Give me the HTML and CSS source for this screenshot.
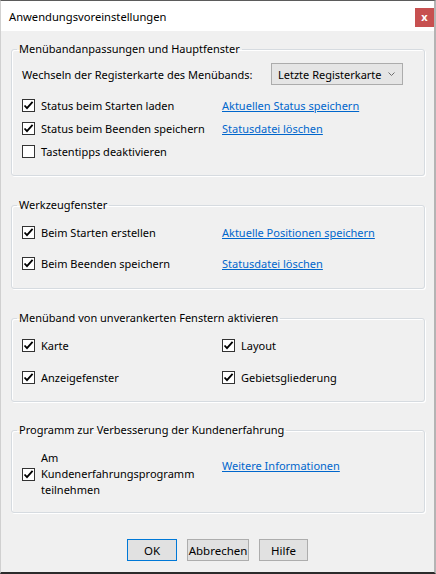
FILE: index.html
```html
<!DOCTYPE html>
<html lang="de">
<head>
<meta charset="utf-8">
<title>Anwendungsvoreinstellungen</title>
<link rel="stylesheet" href="styles.css">
</head>
<body>
<div class="window">
  <div class="titlebar">
    <span class="title">Anwendungsvoreinstellungen</span>
    <span class="close">x</span>
  </div>
  <div class="content">
    <fieldset class="group g1">
      <legend>Menübandanpassungen und Hauptfenster</legend>
      <div class="tabrow">
        <span class="lbl">Wechseln der Registerkarte des Menübands:</span>
        <div class="select">
          <span>Letzte Registerkarte</span>
          <svg class="chev" width="7" height="4" viewBox="0 0 7 4"><path d="M0.5 0.5 L3.5 3.5 L6.5 0.5" fill="none" stroke="#6d6d6d" stroke-width="1"/></svg>
        </div>
      </div>
      <div class="grid rows23">
        <label class="check"><span class="box"><svg width="11" height="11" viewBox="0 0 11 11"><path d="M1.5 5.5 L4 8.2 L9.6 1.8" fill="none" stroke="#000" stroke-width="1.8"/></svg></span>Status beim Starten laden</label>
        <a class="link" href="#">Aktuellen Status speichern</a>
        <label class="check"><span class="box"><svg width="11" height="11" viewBox="0 0 11 11"><path d="M1.5 5.5 L4 8.2 L9.6 1.8" fill="none" stroke="#000" stroke-width="1.8"/></svg></span>Status beim Beenden speichern</label>
        <a class="link" href="#">Statusdatei löschen</a>
        <label class="check"><span class="box"></span>Tastentipps deaktivieren</label>
        <span></span>
      </div>
    </fieldset>

    <fieldset class="group g2">
      <legend>Werkzeugfenster</legend>
      <div class="grid rows24">
        <label class="check"><span class="box"><svg width="11" height="11" viewBox="0 0 11 11"><path d="M1.5 5.5 L4 8.2 L9.6 1.8" fill="none" stroke="#000" stroke-width="1.8"/></svg></span>Beim Starten erstellen</label>
        <a class="link" href="#">Aktuelle Positionen speichern</a>
        <label class="check"><span class="box"><svg width="11" height="11" viewBox="0 0 11 11"><path d="M1.5 5.5 L4 8.2 L9.6 1.8" fill="none" stroke="#000" stroke-width="1.8"/></svg></span>Beim Beenden speichern</label>
        <a class="link" href="#">Statusdatei löschen</a>
      </div>
    </fieldset>

    <fieldset class="group g3">
      <legend>Menüband von unverankerten Fenstern aktivieren</legend>
      <div class="grid rows24 gap8">
        <label class="check"><span class="box"><svg width="11" height="11" viewBox="0 0 11 11"><path d="M1.5 5.5 L4 8.2 L9.6 1.8" fill="none" stroke="#000" stroke-width="1.8"/></svg></span>Karte</label>
        <label class="check"><span class="box"><svg width="11" height="11" viewBox="0 0 11 11"><path d="M1.5 5.5 L4 8.2 L9.6 1.8" fill="none" stroke="#000" stroke-width="1.8"/></svg></span>Layout</label>
        <label class="check"><span class="box"><svg width="11" height="11" viewBox="0 0 11 11"><path d="M1.5 5.5 L4 8.2 L9.6 1.8" fill="none" stroke="#000" stroke-width="1.8"/></svg></span>Anzeigefenster</label>
        <label class="check"><span class="box"><svg width="11" height="11" viewBox="0 0 11 11"><path d="M1.5 5.5 L4 8.2 L9.6 1.8" fill="none" stroke="#000" stroke-width="1.8"/></svg></span>Gebietsgliederung</label>
      </div>
    </fieldset>

    <fieldset class="group g4">
      <legend>Programm zur Verbesserung der Kundenerfahrung</legend>
      <div class="grid">
        <label class="check multi"><span class="box"><svg width="11" height="11" viewBox="0 0 11 11"><path d="M1.5 5.5 L4 8.2 L9.6 1.8" fill="none" stroke="#000" stroke-width="1.8"/></svg></span><span class="mtext">Am<br>Kundenerfahrungsprogramm<br>teilnehmen</span></label>
        <a class="link top" href="#">Weitere Informationen</a>
      </div>
    </fieldset>

    <div class="buttons">
      <span class="btn default">OK</span>
      <span class="btn">Abbrechen</span>
      <span class="btn">Hilfe</span>
    </div>
  </div>
</div>
</body>
</html>
```

FILE: styles.css
```css
* { box-sizing: border-box; }
html, body { margin: 0; padding: 0; }
body {
  font-family: "Noto Sans", "Open Sans", sans-serif;
  font-size: 11px;
  color: #000;
  background: #fff;
}
.window {
  width: 436px;
  height: 574px;
  background: #f0f0f0;
  border-top: 1px solid #5b5b5b;
  border-left: 1px solid #d0d0d0;
  border-right: 2px solid #b4b4b4;
  border-bottom: 2px solid #2b2b2b;
  display: flex;
  flex-direction: column;
}
.titlebar {
  height: 30px;
  background: #fff;
  display: flex;
  align-items: center;
  justify-content: space-between;
  padding-left: 8px;
  padding-right: 0;
}
.title { font-size: 11.2px; }
.close {
  width: 19px;
  height: 19px;
  background: #c75050;
  color: #fff;
  font-weight: bold;
  font-size: 11px;
  line-height: 17px;
  text-align: center;
  align-self: flex-start;
  margin-top: 7px;
}
.content {
  padding: 0 9px 0 10px;
  flex: 1;
  display: flex;
  flex-direction: column;
}
.group {
  margin: 0;
  border: 1px solid #d6dbe0;
  border-radius: 3px;
  box-shadow: 1px 1px 0 #fff, inset 1px 1px 0 #fff;
  padding: 0 10px 12px 10px;
  min-width: 0;
}
.group legend {
  padding: 0 2px;
  margin-left: -5px;
  line-height: 16px;
  height: 16px;
}
.g1 { margin-top: 10px; padding-top: 6px; padding-bottom: 12px; }
.g2 { margin-top: 21px; padding-top: 7px; padding-bottom: 13px; }
.g3 { margin-top: 21px; padding-top: 7px; padding-bottom: 12px; }
.g4 { margin-top: 20px; padding-top: 12px; padding-bottom: 14px; }

.tabrow {
  display: flex;
  align-items: center;
  height: 22px;
  margin-bottom: 9px;
}
.tabrow .lbl { width: 249px; }
.select {
  width: 132px;
  height: 22px;
  background: #e5e5e5;
  border: 1px solid #acacac;
  display: flex;
  align-items: center;
  justify-content: space-between;
  padding: 0 7px 0 6px;
}
.chev { display: block; }

.grid {
  display: grid;
  grid-template-columns: 200px 1fr;
  align-items: center;
}
.rows23 { grid-auto-rows: 23px; }
.rows24 { grid-auto-rows: 24px; row-gap: 7px; }
.gap8 { row-gap: 8px; }

.check {
  display: flex;
  align-items: center;
  gap: 6px;
  white-space: nowrap;
}
.box {
  width: 13px;
  height: 13px;
  border: 1px solid #333;
  background: #fff;
  display: flex;
  flex: none;
}
.box svg { display: block; }
.multi .mtext { line-height: 16px; }
.link {
  color: #0066cc;
  text-decoration: underline;
  white-space: nowrap;
}
.link.top { align-self: start; margin-top: 8px; line-height: 16px; }

.buttons {
  margin-top: 26px;
  display: flex;
  justify-content: center;
  gap: 10px;
  padding-right: 1px;
}
.btn {
  height: 22px;
  border: 1px solid #adadad;
  background: #e1e1e1;
  display: flex;
  align-items: center;
  justify-content: center;
  font-size: 11.5px;
}
.btn:nth-child(1) { width: 50px; }
.btn:nth-child(2) { width: 62px; }
.btn:nth-child(3) { width: 49px; }
.btn.default { border-color: #0078d7; }
```
